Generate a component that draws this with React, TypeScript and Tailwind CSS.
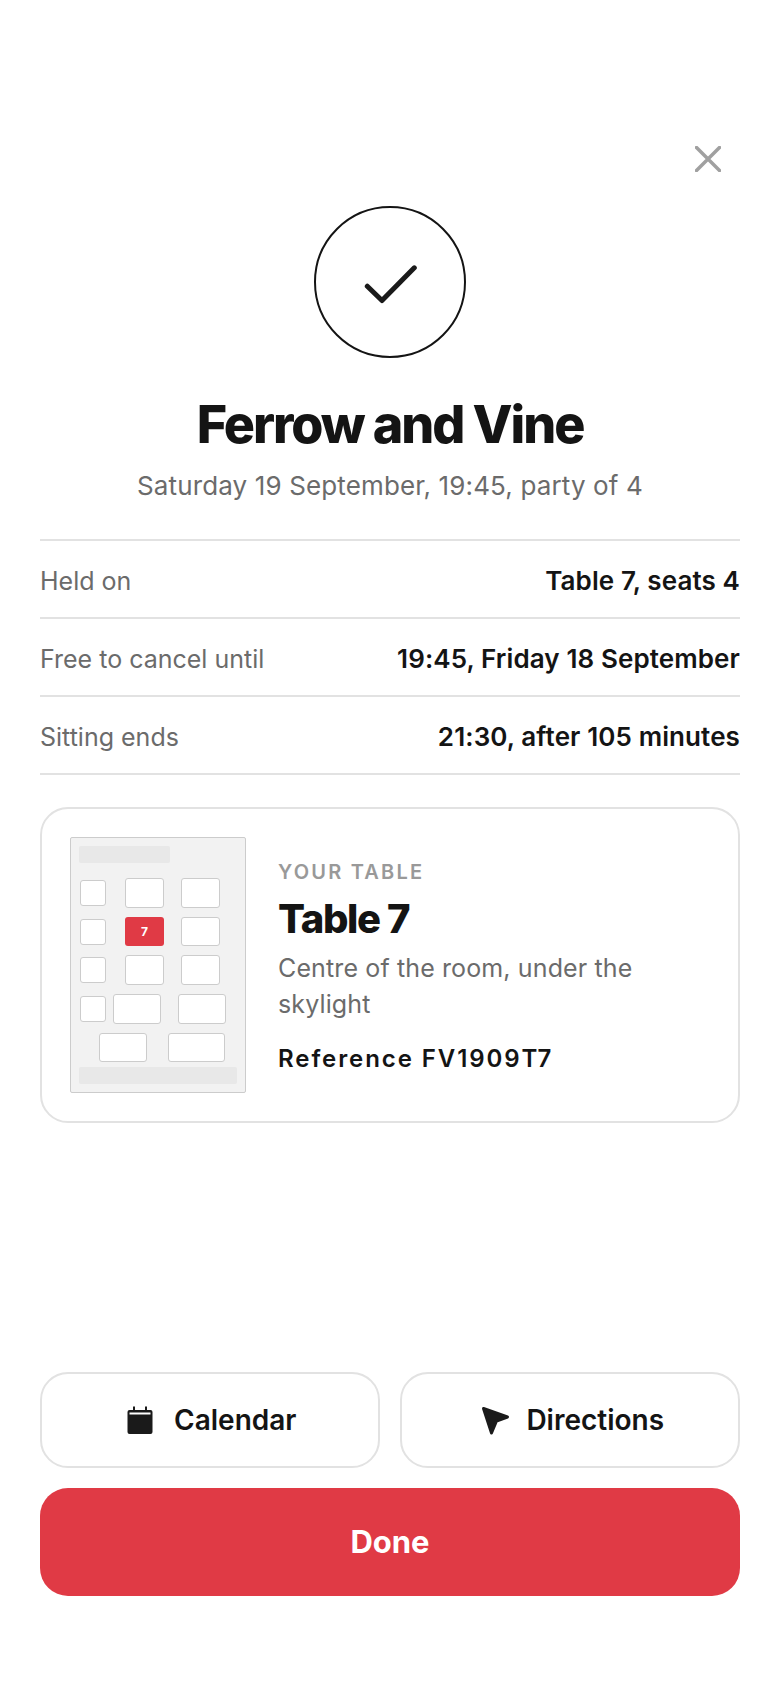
const rows = [
  { label: 'Held on', value: 'Table 7, seats 4' },
  { label: 'Free to cancel until', value: '19:45, Friday 18 September' },
  { label: 'Sitting ends', value: '21:30, after 105 minutes' },
]

function FloorPlan() {
  const table = 'absolute bg-white border-[1.5px] border-[#cccccc] rounded-[3px]'
  return (
    <div className="relative shrink-0 w-[176px] h-[256px] bg-[#f2f2f2] border border-[#cccccc] rounded-[2px]">
      <div className="absolute left-[8px] top-[8px] w-[91px] h-[17px] bg-[#e8e8e8] rounded-[2px]" />

      <div className={`${table} left-[9px] top-[42px] w-[26px] h-[26px]`} />
      <div className={`${table} left-[54px] top-[40px] w-[39px] h-[30px]`} />
      <div className={`${table} left-[110px] top-[40px] w-[39px] h-[30px]`} />

      <div className={`${table} left-[9px] top-[81px] w-[26px] h-[26px]`} />
      <div className="absolute left-[54px] top-[79px] w-[39px] h-[29px] bg-[#e03a45] rounded-[3px] flex items-center justify-center text-white text-[12px] font-bold">
        7
      </div>
      <div className={`${table} left-[110px] top-[79px] w-[39px] h-[29px]`} />

      <div className={`${table} left-[9px] top-[119px] w-[26px] h-[26px]`} />
      <div className={`${table} left-[54px] top-[117px] w-[39px] h-[30px]`} />
      <div className={`${table} left-[110px] top-[117px] w-[39px] h-[30px]`} />

      <div className={`${table} left-[9px] top-[158px] w-[26px] h-[26px]`} />
      <div className={`${table} left-[42px] top-[156px] w-[48px] h-[30px]`} />
      <div className={`${table} left-[107px] top-[156px] w-[48px] h-[30px]`} />

      <div className={`${table} left-[28px] top-[195px] w-[48px] h-[29px]`} />
      <div className={`${table} left-[97px] top-[195px] w-[57px] h-[29px]`} />

      <div className="absolute left-[8px] top-[229px] w-[158px] h-[17px] bg-[#e8e8e8] rounded-[2px]" />
    </div>
  )
}

export default function App() {
  return (
    <div className="w-[780px] h-[1688px] bg-white flex flex-col px-[40px] pt-[146px] pb-[92px] text-[#141414] font-['Inter',sans-serif]">
      {/* Close */}
      <div className="flex justify-end h-[26px] pr-[19px]">
        <svg width="26" height="26" viewBox="0 0 26 26" fill="none" stroke="#a0a0a0" strokeWidth="3.5" strokeLinecap="round">
          <path d="M1.5 1.5L24.5 24.5M24.5 1.5L1.5 24.5" />
        </svg>
      </div>

      {/* Heading */}
      <div className="flex flex-col items-center mt-[34px]">
        <div className="w-[152px] h-[152px] rounded-full border-2 border-[#141414] flex items-center justify-center">
          <svg width="56" height="44" viewBox="0 0 56 44" fill="none" stroke="#1a1a1a" strokeWidth="5" strokeLinecap="round" strokeLinejoin="round">
            <path d="M5.3 26.2L20 40.5L52.3 7.8" />
          </svg>
        </div>
        <h1 className="mt-[35px] text-[52px] leading-[64px] font-extrabold tracking-[-0.04em]">Ferrow and Vine</h1>
        <p className="mt-[13px] text-[26px] leading-[32px] text-[#6b6b6b] tracking-[0.005em]">
          Saturday 19 September, 19:45, party of 4
        </p>
      </div>

      {/* Details */}
      <div className="mt-[37px] border-t-2 border-[#e2e2e2]">
        {rows.map((row) => (
          <div key={row.label} className="flex items-baseline justify-between h-[78px] pt-[20px] border-b-2 border-[#e2e2e2]">
            <span className="text-[25px] text-[#6b6b6b]">{row.label}</span>
            <span className="text-[26px] font-semibold tracking-[0.004em]">{row.value}</span>
          </div>
        ))}
      </div>

      {/* Table card */}
      <div className="mt-[32px] flex items-center gap-[32px] h-[316px] px-[28px] border-2 border-[#e2e2e2] rounded-[28px]">
        <FloorPlan />
        <div className="flex flex-col pt-[5px]">
          <span className="text-[20px] leading-[24px] font-semibold tracking-[0.11em] text-[#999999]">YOUR TABLE</span>
          <span className="mt-[9px] text-[40px] leading-[52px] font-extrabold tracking-[-0.035em]">Table 7</span>
          <p className="mt-[5px] text-[25px] leading-[36px] text-[#6b6b6b] tracking-[0.005em]">Centre of the room, under the skylight</p>
          <span className="mt-[21px] text-[24px] leading-[32px] font-semibold tracking-[0.08em]">Reference FV1909T7</span>
        </div>
      </div>

      {/* Actions */}
      <div className="mt-auto flex flex-col gap-[20px]">
        <div className="flex gap-[20px]">
          <button className="flex-1 h-[96px] flex items-center justify-center gap-[21px] pl-[4px] border-2 border-[#e2e2e2] rounded-[28px] text-[28px] font-semibold">
            <svg width="26" height="28" viewBox="0 0 26 28" fill="#1a1a1a">
              <path d="M6 0.5h2v3.5h10V0.5h2v3.5h3.5A2 2 0 0 1 25.5 6v20a2 2 0 0 1-2 2h-21a2 2 0 0 1-2-2V6a2 2 0 0 1 2-2H6z" />
              <path d="M2.5 7.5h21" stroke="#ffffff" strokeWidth="2" />
            </svg>
            Calendar
          </button>
          <button className="flex-1 h-[96px] flex items-center justify-center gap-[16px] pl-[5px] border-2 border-[#e2e2e2] rounded-[28px] text-[28px] font-semibold">
            <svg width="30" height="30" viewBox="0 0 30 30" fill="#1a1a1a" stroke="#1a1a1a" strokeWidth="3" strokeLinejoin="round">
              <path d="M3.5 3.5L27.5 12L16.5 16L11.5 28Z" />
            </svg>
            Directions
          </button>
        </div>
        <button className="h-[108px] bg-[#e03a45] rounded-[28px] text-white text-[31px] font-bold">Done</button>
      </div>
    </div>
  )
}
